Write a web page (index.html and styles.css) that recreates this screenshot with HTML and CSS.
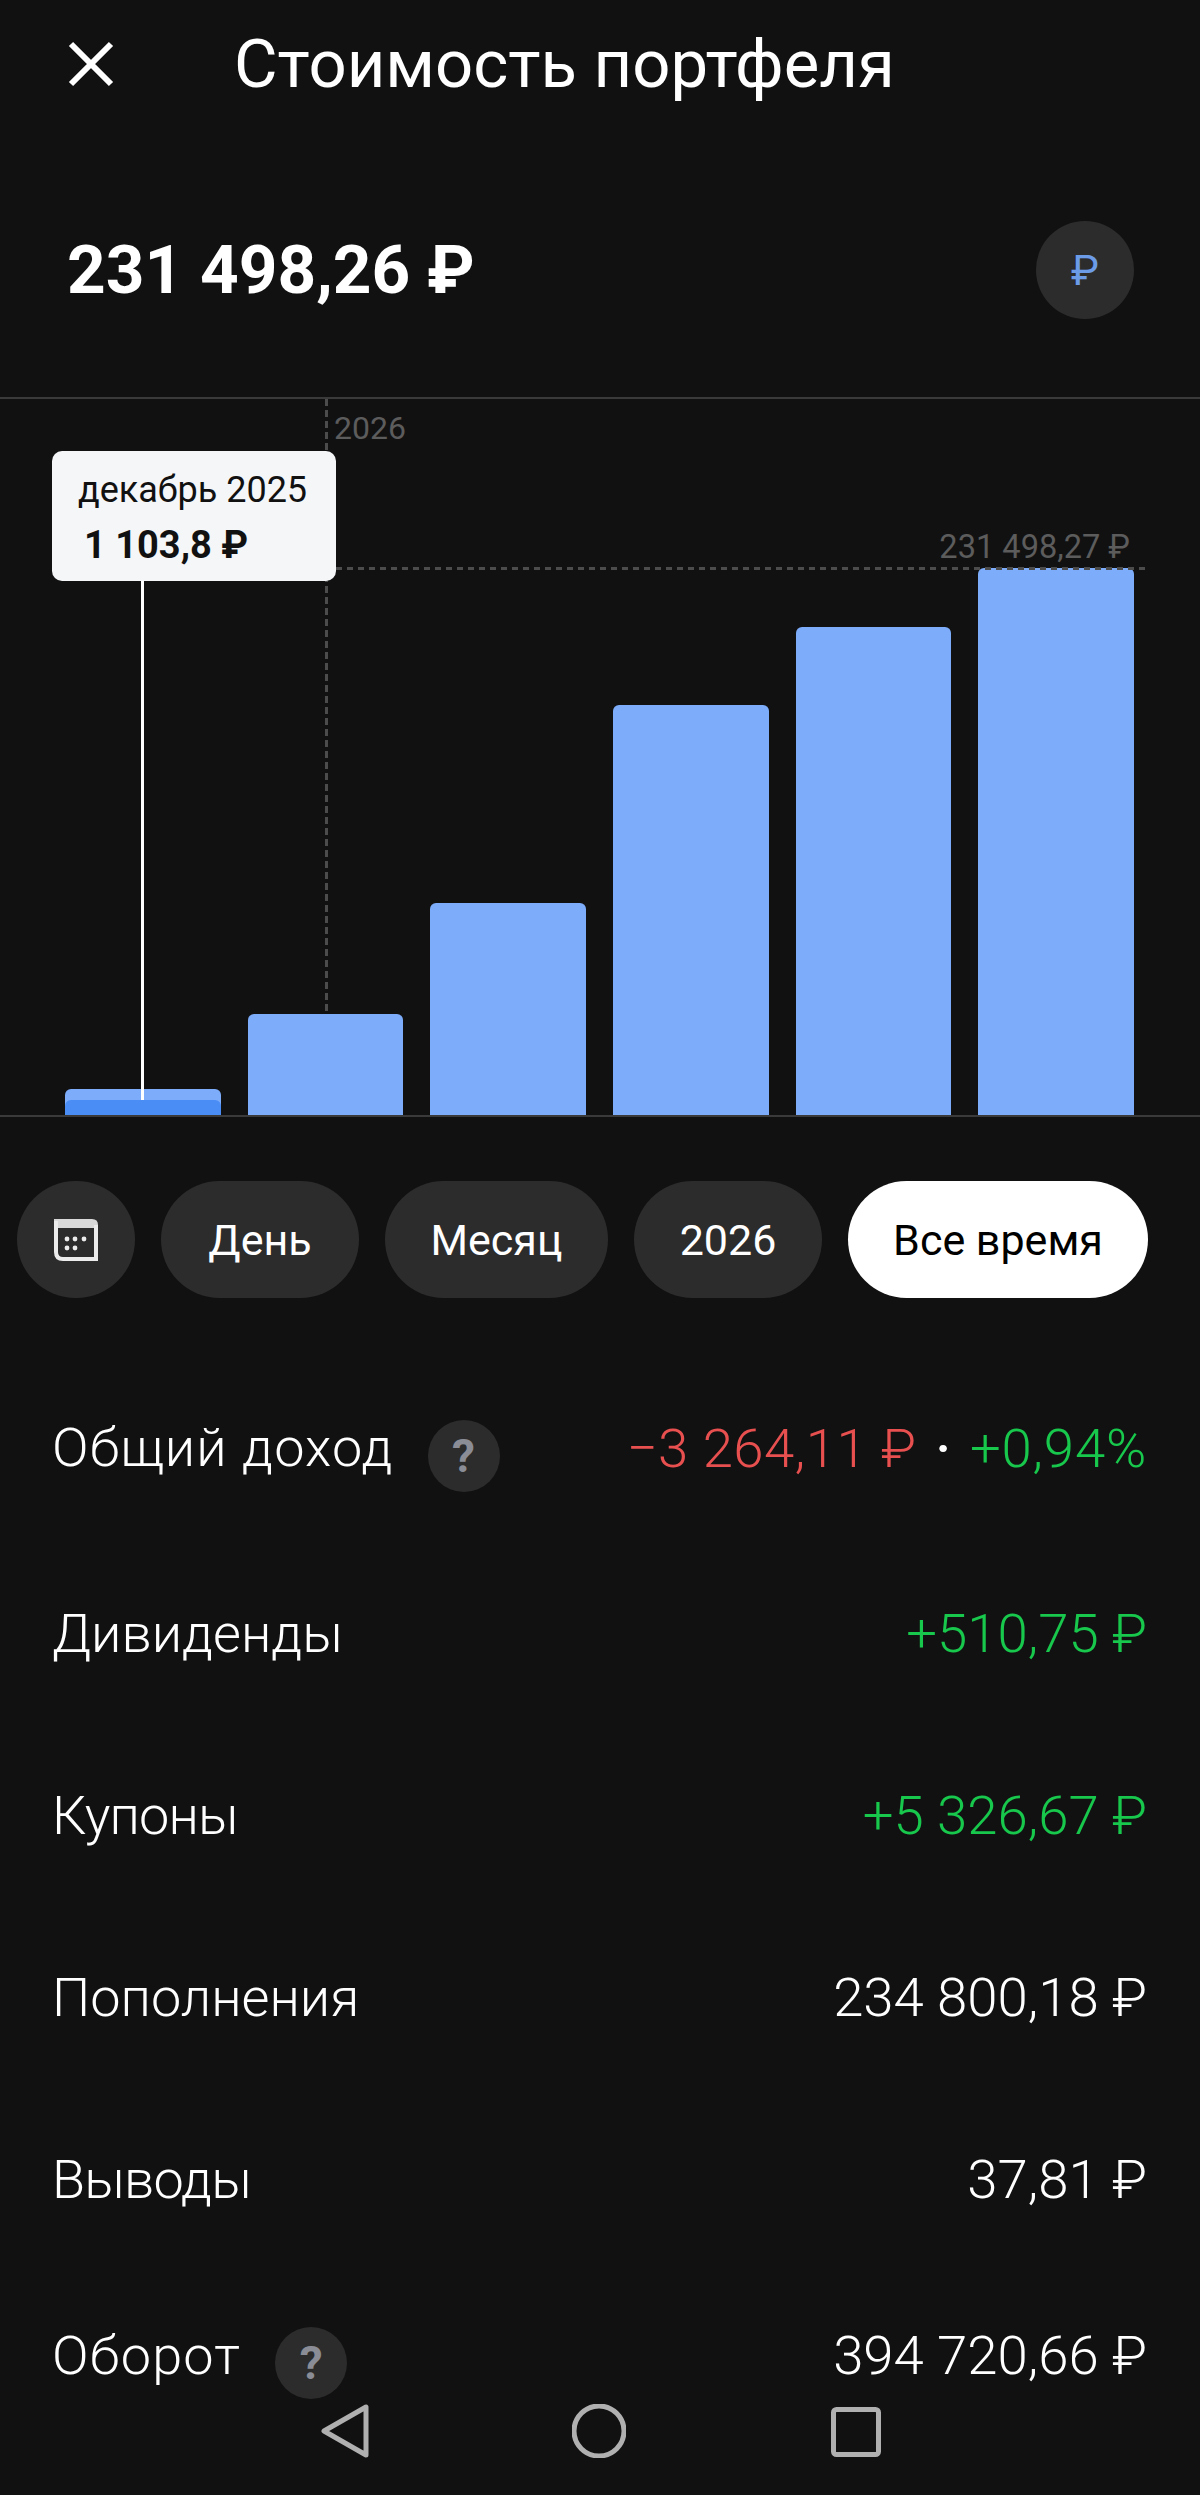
FILE: index.html
```html
<!DOCTYPE html>
<html lang="ru">
<head>
<meta charset="utf-8">
<title>Стоимость портфеля</title>
<link rel="stylesheet" href="styles.css">
</head>
<body>
<div class="screen">
  <header class="header">
    <svg class="close" viewBox="0 0 46 46"><path d="M3 3L43 43M43 3L3 43"/></svg>
    <h1 class="title">Стоимость портфеля</h1>
  </header>
  <section class="summary">
    <div class="total">231 498,26 ₽</div>
    <div class="currency">₽</div>
  </section>
  <section class="chart">
    <div class="bars">
      <div class="bar bar-active" style="height:26px"><div class="bar-inner"></div></div>
      <div class="bar" style="height:101px"></div>
      <div class="bar" style="height:212px"></div>
      <div class="bar" style="height:410px"></div>
      <div class="bar" style="height:488px"></div>
      <div class="bar" style="height:547px"></div>
    </div>
    <div class="vline"></div>
    <div class="hline"></div>
    <div class="year">2026</div>
    <div class="maxval">231 498,27 ₽</div>
    <div class="pointer"></div>
    <div class="tooltip">
      <div class="tip-date">декабрь 2025</div>
      <div class="tip-value">1 103,8 ₽</div>
    </div>
  </section>
  <nav class="chips">
    <div class="chip chip-icon">
      <svg class="cal" viewBox="0 0 44 42">
        <path class="cal-head" d="M0 0H38Q44 0 44 6V9H0Z"/>
        <path class="cal-body" d="M2 2V33Q2 40 9 40H42V6"/>
        <circle cx="13" cy="20" r="2.4"/><circle cx="21" cy="20" r="2.4"/><circle cx="30" cy="20" r="2.4"/>
        <circle cx="13" cy="29" r="2.4"/><circle cx="21" cy="29" r="2.4"/>
      </svg>
    </div>
    <div class="chip chip-day">День</div>
    <div class="chip chip-month">Месяц</div>
    <div class="chip chip-year">2026</div>
    <div class="chip chip-all">Все время</div>
  </nav>
  <section class="rows">
    <div class="row row-first">
      <div class="label label-income"><span>Общий доход</span><span class="help">?</span></div>
      <div class="value"><span class="neg">−3 264,11 ₽</span><span class="dot">·</span><span class="pos pct">+0,94%</span></div>
    </div>
    <div class="row"><div class="label">Дивиденды</div><div class="value pos">+510,75 ₽</div></div>
    <div class="row"><div class="label label-narrow">Купоны</div><div class="value pos">+5 326,67 ₽</div></div>
    <div class="row"><div class="label">Пополнения</div><div class="value">234 800,18 ₽</div></div>
    <div class="row"><div class="label label-narrow">Выводы</div><div class="value">37,81 ₽</div></div>
    <div class="row row-last">
      <div class="label label-turnover"><span>Оборот</span><span class="help">?</span></div>
      <div class="value">394 720,66 ₽</div>
    </div>
  </section>
  <div class="navbar">
    <svg class="nav-back" viewBox="0 0 48 54"><path d="M45 3V51L3 27Z"/></svg>
    <svg class="nav-home" viewBox="0 0 54 54"><circle cx="27" cy="27" r="25"/></svg>
    <svg class="nav-recent" viewBox="0 0 50 50"><rect x="2.5" y="2.5" width="45" height="45" rx="3"/></svg>
  </div>
</div>
</body>
</html>
```
FILE: styles.css
```css
* { box-sizing: border-box; }
html, body { margin: 0; padding: 0; background: #111112; }
body { font-family: Roboto, "Noto Sans", "Liberation Sans", sans-serif; color: #fff; }
.screen { position: relative; width: 1200px; height: 2495px; overflow: hidden; background: #111112; }

.header { display: flex; align-items: center; height: 128px; padding-left: 68px; }
.close { width: 46px; height: 46px; fill: none; stroke: #fff; stroke-width: 6; }
.title { margin: 0 0 0 120px; font-size: 67px; font-weight: 400; line-height: 1; white-space: nowrap; }

.summary { display: flex; align-items: center; justify-content: space-between; padding: 93px 66px 78px 67px; }
.total { font-size: 67.5px; font-weight: 700; line-height: 1; }
.currency { display: flex; align-items: center; justify-content: center; width: 98px; height: 98px; border-radius: 50%; background: #2c2c2c; color: #6c9ce8; font-size: 42px; font-weight: 400; }

.chart { position: relative; height: 720px; border-top: 2px solid #3a3a3a; border-bottom: 2px solid #3a3a3a; }
.bars { display: flex; align-items: flex-end; gap: 27.2px; height: 100%; padding-left: 65px; }
.bar { position: relative; width: 155.5px; background: #7dadfa; border-radius: 6px 6px 0 0; overflow: hidden; }
.bar-inner { position: absolute; left: 0; right: 0; bottom: 0; height: 15px; background: #4a8df5; border-radius: 6px 6px 0 0; }
.vline { position: absolute; left: 325px; top: 0; width: 3px; height: 615px; background: repeating-linear-gradient(to bottom, #4c4c4c 0 7px, transparent 7px 11px); }
.hline { position: absolute; left: 336px; right: 53px; top: 168px; height: 3px; background: repeating-linear-gradient(to right, #4c4c4c 0 6px, transparent 6px 11px); }
.year { position: absolute; left: 334px; top: 9px; color: #5c5c5c; font-size: 32px; line-height: 40px; }
.maxval { position: absolute; right: 70px; top: 128px; color: #5c5c5c; font-size: 32.6px; line-height: 40px; white-space: nowrap; }
.pointer { position: absolute; left: 141px; top: 170px; width: 3px; height: 531px; background: #fff; }
.tooltip { position: absolute; left: 52px; top: 52px; width: 284px; height: 130px; padding: 16px 0 0 26px; background: #f5f6f8; border-radius: 10px; color: #111; }
.tip-date { font-size: 36px; line-height: 46px; white-space: nowrap; }
.tip-value { margin: 9px 0 0 6px; font-size: 38px; font-weight: 700; line-height: 46px; white-space: nowrap; }

.chips { display: flex; gap: 26px; padding: 64px 0 0 17px; }
.chip { display: flex; align-items: center; justify-content: center; height: 117px; border-radius: 59px; background: #2c2c2c; font-size: 43px; white-space: nowrap; }
.chip-icon { width: 118px; }
.cal { width: 44px; height: 42px; fill: #ececec; }
.cal-head { fill: #d9d9d9; }
.cal-body { fill: none; stroke: #ececec; stroke-width: 4; }
.chip-day { width: 198px; }
.chip-month { width: 223px; }
.chip-year { width: 188px; }
.chip-all { width: 300px; background: #fff; color: #000; }

.rows { padding: 0 53px 0 52px; }
.row { display: flex; align-items: center; justify-content: space-between; height: 182px; font-size: 54px; }
.row-first { margin-top: 55px; height: 189px; }
.row-last { margin-top: -6px; }
.label { display: flex; align-items: center; font-weight: 300; white-space: nowrap; }
.label-income > span:first-child { letter-spacing: 1.15px; }
.label-turnover > span:first-child { letter-spacing: 1.2px; }
.label-narrow { letter-spacing: -0.8px; }
.value { font-size: 54.5px; font-weight: 300; white-space: nowrap; }
.help { display: flex; align-items: center; justify-content: center; width: 72px; height: 72px; margin-left: 34px; border-radius: 50%; background: #2c2c2c; color: #8a8d96; font-size: 46px; font-weight: 700; letter-spacing: 0; transform: translateY(8px); }
.neg { color: #e85050; letter-spacing: 0.5px; }
.pos { color: #18c84c; }
.pct { letter-spacing: 0.8px; }
.dot { margin: 0 19px; color: #fff; font-weight: 500; }

.navbar { position: absolute; left: 0; right: 0; top: 2404px; height: 54px; }
.navbar svg { position: absolute; top: 0; fill: none; stroke: #b0b0b0; stroke-width: 5; stroke-linejoin: round; }
.nav-back { left: 321px; width: 48px; height: 54px; }
.nav-home { left: 572px; width: 54px; height: 54px; }
.navbar .nav-recent { left: 831px; top: 3px; width: 50px; height: 50px; }
```
